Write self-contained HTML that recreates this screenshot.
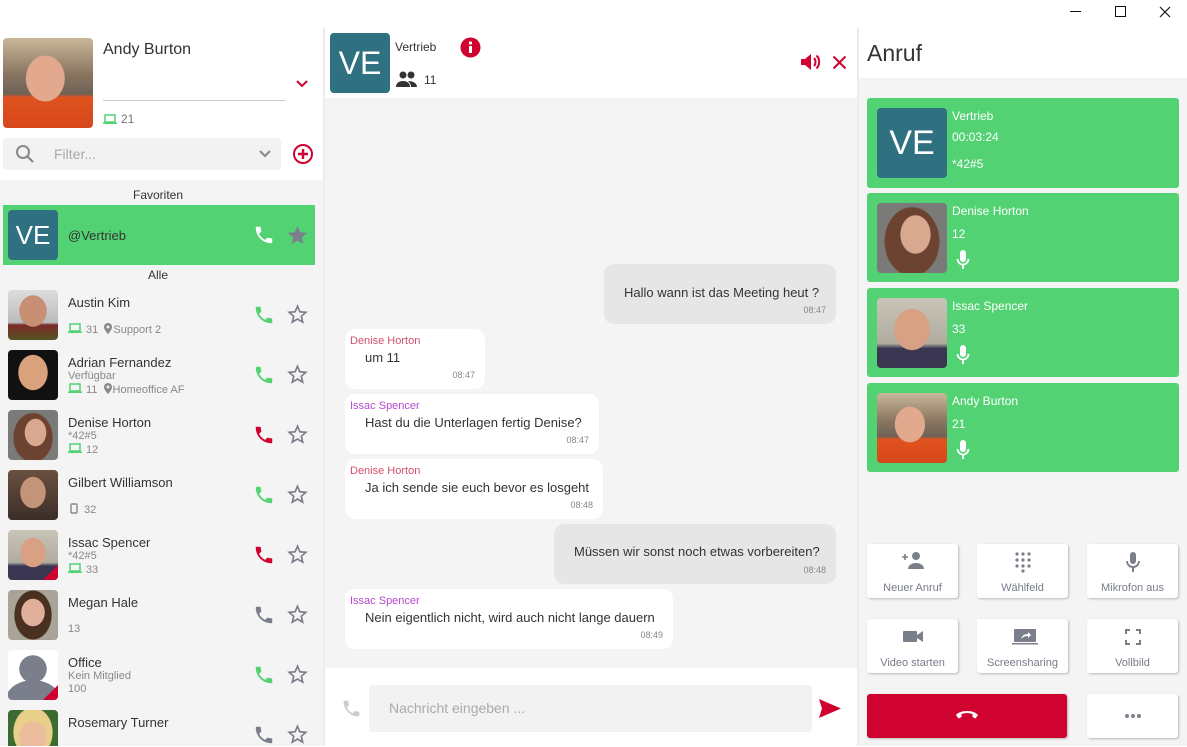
<!DOCTYPE html>
<html><head><meta charset="utf-8">
<style>
*{box-sizing:border-box;margin:0;padding:0}
body{width:1187px;height:746px;position:relative;overflow:hidden;background:#fff;font-family:"Liberation Sans",sans-serif;color:#333}
.a{position:absolute}
.t{position:absolute;white-space:nowrap}
.ph{position:absolute;border-radius:4px;overflow:hidden}
.ve{position:absolute;background:#2f7180;color:#fff;border-radius:4px;display:flex;align-items:center;justify-content:center}
.bub{position:absolute;border-radius:10px;background:#fff}
.me{background:#e6e6e6}
.nm{position:absolute;font-size:11px;left:5px;top:6px}
.msg{position:absolute;font-size:13px;color:#333;white-space:nowrap}
.tm{position:absolute;font-size:9px;color:#888;right:10px;bottom:9px}
.card{position:absolute;left:867px;width:312px;background:#52d273;border-radius:3px;color:#fff}
.btn{position:absolute;width:91px;height:54px;background:#fff;border-radius:3px;box-shadow:1px 1px 2px rgba(0,0,0,.25);font-size:11px;color:#777c88;text-align:center}
.btn span{position:absolute;left:0;right:0;top:38px}
.btn svg{position:absolute;left:35px;top:7px}
.sub{font-size:11px;color:#888}
.lp{display:inline-block;vertical-align:-1px;margin-right:4px}
.pin{display:inline-block;vertical-align:-1px;margin-right:1px}
</style></head><body>
<svg width="0" height="0" style="position:absolute"><defs>
<path id="ph" d="M6.62 10.79c1.44 2.83 3.76 5.14 6.59 6.59l2.2-2.2c.27-.27.67-.36 1.02-.24 1.12.37 2.33.57 3.57.57.55 0 1 .45 1 1V20c0 .55-.45 1-1 1-9.39 0-17-7.61-17-17 0-.55.45-1 1-1h3.5c.55 0 1 .45 1 1 0 1.25.2 2.45.57 3.57.11.35.03.74-.25 1.02l-2.2 2.2z"/>
<path id="st" d="M22 9.24l-7.19-.62L12 2 9.19 8.63 2 9.24l5.46 4.73L5.82 21 12 17.27 18.18 21l-1.63-7.03L22 9.24zM12 15.4l-3.76 2.27 1-4.28-3.32-2.88 4.38-.38L12 6.1l1.71 4.04 4.38.38-3.32 2.88 1 4.28L12 15.4z"/>
<g id="lap"><rect x="2" y="1" width="10" height="7" fill="none" stroke="#52d273" stroke-width="1.5"/><rect x="0" y="8.5" width="14" height="1.5" fill="#52d273"/></g>
<path id="pn" d="M4 0C1.8 0 0 1.8 0 4c0 3 4 7 4 7s4-4 4-7c0-2.2-1.8-4-4-4zm0 5.5A1.5 1.5 0 1 1 4 2.5a1.5 1.5 0 0 1 0 3z"/>
</defs></svg>

<!-- title bar controls -->
<div class="a" style="left:1070px;top:11px;width:11px;height:1px;background:#111"></div>
<div class="a" style="left:1115px;top:6px;width:11px;height:11px;border:1px solid #111"></div>
<svg class="a" style="left:1159px;top:6px" width="12" height="12"><path d="M1 1L11 11M11 1L1 11" stroke="#111" stroke-width="1.2"/></svg>

<!-- LEFT PANEL -->
<div class="a" style="left:0;top:180px;width:323px;height:566px;background:#f4f4f4"></div>
<div class="a" style="left:323px;top:28px;width:2px;height:718px;background:#ececec"></div>

<div class="ph" style="left:3px;top:38px;width:90px;height:90px;background:radial-gradient(ellipse 22% 26% at 47% 45%,#e2a98f 96%,transparent 100%),linear-gradient(#c9b79a 0,#8a7660 40%,#6e6257 62%,#e0531f 66%,#d6471a 100%)"></div>
<div class="t" style="left:103px;top:41px;font-size:16px;color:#333">Andy Burton</div>
<div class="a" style="left:103px;top:100px;width:183px;height:1px;background:#ccc"></div>
<svg class="a" style="left:295px;top:79px" width="14" height="10"><path d="M2 2L7 7L12 2" stroke="#d0022f" stroke-width="2" fill="none"/></svg>
<svg class="a" style="left:103px;top:114px" width="14" height="11"><use href="#lap"/></svg>
<div class="t" style="left:121px;top:112px;font-size:12px;color:#777">21</div>

<div class="a" style="left:3px;top:138px;width:278px;height:32px;background:#f2f2f2;border-radius:4px"></div>
<svg class="a" style="left:15px;top:144px" width="20" height="20"><circle cx="8" cy="8" r="6" fill="none" stroke="#888" stroke-width="2"/><path d="M12.5 12.5L18 18" stroke="#888" stroke-width="2.2"/></svg>
<div class="t" style="left:54px;top:146px;font-size:14px;color:#aaa">Filter...</div>
<svg class="a" style="left:258px;top:149px" width="14" height="10"><path d="M2 2L7 7L12 2" stroke="#888" stroke-width="2" fill="none"/></svg>
<svg class="a" style="left:292px;top:143px" width="22" height="22"><circle cx="11" cy="11" r="9" fill="none" stroke="#d0022f" stroke-width="2"/><path d="M11 6V16M6 11H16" stroke="#d0022f" stroke-width="2.4"/></svg>

<div class="t" style="left:0;width:316px;text-align:center;top:188px;font-size:12px;color:#333">Favoriten</div>
<div class="a" style="left:3px;top:205px;width:312px;height:60px;background:#52d273"></div>
<div class="ve" style="left:8px;top:210px;width:50px;height:50px;font-size:26px">VE</div>
<div class="t" style="left:68px;top:228px;font-size:13px;color:#333">@Vertrieb</div>
<svg class="a" style="left:253px;top:224px" width="22" height="22" viewBox="0 0 24 24"><use href="#ph" fill="#fff"/></svg>
<svg class="a" style="left:286px;top:224px" width="23" height="23" viewBox="0 0 24 24"><path fill="#7b7f8b" d="M12 17.27L18.18 21l-1.64-7.03L22 9.24l-7.19-.61L12 2 9.19 8.63 2 9.24l5.46 4.73L5.82 21z"/></svg>
<div class="t" style="left:0;width:316px;text-align:center;top:268px;font-size:12px;color:#333">Alle</div>

<!-- Austin -->
<div class="ph" style="left:8px;top:290px;width:50px;height:50px;background:radial-gradient(ellipse 28% 32% at 50% 42%,#c98f74 96%,transparent 100%),linear-gradient(#ddd 0,#bbb 65%,#7a2a2a 70%,#552 100%)"></div>
<div class="t" style="left:68px;top:295px;font-size:13px">Austin Kim</div>
<div class="t sub" style="left:68px;top:323px"><svg class="lp" width="14" height="11"><use href="#lap"/></svg>31 &nbsp;<svg class="pin" width="8" height="11"><use href="#pn" fill="#888"/></svg>Support 2</div>
<!-- Adrian -->
<div class="ph" style="left:8px;top:350px;width:50px;height:50px;background:radial-gradient(ellipse 30% 36% at 50% 45%,#d9a27c 96%,transparent 100%),#111"></div>
<div class="t" style="left:68px;top:355px;font-size:13px">Adrian Fernandez</div>
<div class="t sub" style="left:68px;top:370px">Verfügbar</div>
<div class="t sub" style="left:68px;top:383px"><svg class="lp" width="14" height="11"><use href="#lap"/></svg>11 &nbsp;<svg class="pin" width="8" height="11"><use href="#pn" fill="#888"/></svg>Homeoffice AF</div>
<!-- Denise -->
<div class="ph" style="left:8px;top:410px;width:50px;height:50px;background:radial-gradient(ellipse 22% 28% at 55% 45%,#d8a88f 96%,transparent 100%),radial-gradient(ellipse 40% 50% at 50% 55%,#6b4330 96%,transparent 100%),#7a7a78"></div>
<div class="t" style="left:68px;top:415px;font-size:13px">Denise Horton</div>
<div class="t sub" style="left:68px;top:430px">*42#5</div>
<div class="t sub" style="left:68px;top:443px"><svg class="lp" width="14" height="11"><use href="#lap"/></svg>12</div>
<!-- Gilbert -->
<div class="ph" style="left:8px;top:470px;width:50px;height:50px;background:radial-gradient(ellipse 26% 32% at 50% 45%,#c49478 96%,transparent 100%),linear-gradient(#6a5040,#3a2e28)"></div>
<div class="t" style="left:68px;top:475px;font-size:13px">Gilbert Williamson</div>
<div class="t sub" style="left:68px;top:503px"><svg class="lp" width="8" height="11" style="margin-left:2px;margin-right:6px"><rect x="1" y="1" width="6" height="9" rx="1" fill="none" stroke="#888" stroke-width="1.4"/></svg>32</div>
<!-- Issac -->
<div class="ph" style="left:8px;top:530px;width:50px;height:50px;background:radial-gradient(ellipse 26% 30% at 50% 45%,#d9a184 96%,transparent 100%),linear-gradient(#c9c4b8 0,#b0aca0 65%,#3a3550 72%,#3a3550 100%)"><div class="a" style="right:0;bottom:0;width:0;height:0;border-left:15px solid transparent;border-bottom:15px solid #d0022f"></div></div>
<div class="t" style="left:68px;top:535px;font-size:13px">Issac Spencer</div>
<div class="t sub" style="left:68px;top:550px">*42#5</div>
<div class="t sub" style="left:68px;top:563px"><svg class="lp" width="14" height="11"><use href="#lap"/></svg>33</div>
<!-- Megan -->
<div class="ph" style="left:8px;top:590px;width:50px;height:50px;background:radial-gradient(ellipse 24% 28% at 50% 45%,#e0b09a 96%,transparent 100%),radial-gradient(ellipse 38% 50% at 50% 50%,#4a3020 96%,transparent 100%),#a8a598"></div>
<div class="t" style="left:68px;top:595px;font-size:13px">Megan Hale</div>
<div class="t sub" style="left:68px;top:623px">13</div>
<!-- Office -->
<div class="ph" style="left:8px;top:650px;width:50px;height:50px;background:radial-gradient(circle at 50% 38%,#7b7f8b 34%,transparent 35%),radial-gradient(ellipse 55% 40% at 50% 100%,#7b7f8b 98%,transparent 100%),#fff"><div class="a" style="right:0;bottom:0;width:0;height:0;border-left:15px solid transparent;border-bottom:15px solid #d0022f"></div></div>
<div class="t" style="left:68px;top:655px;font-size:13px">Office</div>
<div class="t sub" style="left:68px;top:670px">Kein Mitglied</div>
<div class="t sub" style="left:68px;top:683px">100</div>
<!-- Rosemary -->
<div class="ph" style="left:8px;top:710px;width:50px;height:36px;border-radius:4px 4px 0 0;background:radial-gradient(ellipse 28% 45% at 50% 75%,#ebbc9e 96%,transparent 100%),radial-gradient(ellipse 40% 70% at 50% 62%,#e8cf8a 96%,transparent 100%),#3d6a30"></div>
<div class="t" style="left:68px;top:715px;font-size:13px">Rosemary Turner</div>

<svg class="a" style="left:253px;top:304px" width="22" height="22" viewBox="0 0 24 24"><use href="#ph" fill="#52d273"/></svg>
<svg class="a" style="left:253px;top:364px" width="22" height="22" viewBox="0 0 24 24"><use href="#ph" fill="#52d273"/></svg>
<svg class="a" style="left:253px;top:424px" width="22" height="22" viewBox="0 0 24 24"><use href="#ph" fill="#d0022f"/></svg>
<svg class="a" style="left:253px;top:484px" width="22" height="22" viewBox="0 0 24 24"><use href="#ph" fill="#52d273"/></svg>
<svg class="a" style="left:253px;top:544px" width="22" height="22" viewBox="0 0 24 24"><use href="#ph" fill="#d0022f"/></svg>
<svg class="a" style="left:253px;top:604px" width="22" height="22" viewBox="0 0 24 24"><use href="#ph" fill="#7b7f8b"/></svg>
<svg class="a" style="left:253px;top:664px" width="22" height="22" viewBox="0 0 24 24"><use href="#ph" fill="#52d273"/></svg>
<svg class="a" style="left:253px;top:724px" width="22" height="22" viewBox="0 0 24 24"><use href="#ph" fill="#7b7f8b"/></svg>
<svg class="a" style="left:285px;top:302px" width="25" height="25" viewBox="0 0 24 24"><use href="#st" fill="#7b7f8b"/></svg>
<svg class="a" style="left:285px;top:362px" width="25" height="25" viewBox="0 0 24 24"><use href="#st" fill="#7b7f8b"/></svg>
<svg class="a" style="left:285px;top:422px" width="25" height="25" viewBox="0 0 24 24"><use href="#st" fill="#7b7f8b"/></svg>
<svg class="a" style="left:285px;top:482px" width="25" height="25" viewBox="0 0 24 24"><use href="#st" fill="#7b7f8b"/></svg>
<svg class="a" style="left:285px;top:542px" width="25" height="25" viewBox="0 0 24 24"><use href="#st" fill="#7b7f8b"/></svg>
<svg class="a" style="left:285px;top:602px" width="25" height="25" viewBox="0 0 24 24"><use href="#st" fill="#7b7f8b"/></svg>
<svg class="a" style="left:285px;top:662px" width="25" height="25" viewBox="0 0 24 24"><use href="#st" fill="#7b7f8b"/></svg>
<svg class="a" style="left:285px;top:722px" width="25" height="25" viewBox="0 0 24 24"><use href="#st" fill="#7b7f8b"/></svg>

<!-- MIDDLE -->
<div class="a" style="left:325px;top:98px;width:532px;height:570px;background:#f4f4f4"></div>
<div class="a" style="left:857px;top:28px;width:2px;height:718px;background:#ececec"></div>
<div class="ve" style="left:330px;top:33px;width:60px;height:60px;font-size:32px">VE</div>
<div class="t" style="left:395px;top:40px;font-size:12px;color:#333">Vertrieb</div>
<svg class="a" style="left:460px;top:37px" width="21" height="21"><circle cx="10.5" cy="10.5" r="10" fill="#d0022f"/><circle cx="10.5" cy="6" r="1.6" fill="#fff"/><rect x="9" y="9" width="3" height="7" fill="#fff"/></svg>
<svg class="a" style="left:395px;top:70px" width="24" height="18" viewBox="0 0 24 18"><circle cx="8" cy="5" r="3.5" fill="#333"/><circle cx="16" cy="5" r="3.5" fill="#333"/><path d="M1 17c0-4 3-6 7-6s7 2 7 6z M13 11c4 0 9 1.5 9 6h-6c0-2-1-4-3-6z" fill="#333"/></svg>
<div class="t" style="left:424px;top:73px;font-size:12px;color:#333">11</div>
<svg class="a" style="left:800px;top:53px" width="22" height="18" viewBox="0 0 22 18"><path d="M1 6h4l6-5v16l-6-5H1z" fill="#d0022f"/><path d="M14 5c2 2 2 6 0 8M16.5 2.5c3.5 3.5 3.5 9.5 0 13" stroke="#d0022f" stroke-width="2" fill="none"/></svg>
<svg class="a" style="left:832px;top:55px" width="15" height="15"><path d="M1.5 1.5L13.5 13.5M13.5 1.5L1.5 13.5" stroke="#d0022f" stroke-width="2"/></svg>

<div class="bub me" style="left:604px;top:264px;width:232px;height:60px"><div class="msg" style="left:20px;top:21px">Hallo wann ist das Meeting heut ?</div><div class="tm">08:47</div></div>
<div class="bub" style="left:345px;top:329px;width:140px;height:60px"><div class="nm" style="color:#d0506a">Denise Horton</div><div class="msg" style="left:20px;top:21px">um 11</div><div class="tm">08:47</div></div>
<div class="bub" style="left:345px;top:394px;width:254px;height:60px"><div class="nm" style="color:#b548d0">Issac Spencer</div><div class="msg" style="left:20px;top:21px">Hast du die Unterlagen fertig Denise?</div><div class="tm">08:47</div></div>
<div class="bub" style="left:345px;top:459px;width:258px;height:60px"><div class="nm" style="color:#d0506a">Denise Horton</div><div class="msg" style="left:20px;top:21px">Ja ich sende sie euch bevor es losgeht</div><div class="tm">08:48</div></div>
<div class="bub me" style="left:554px;top:524px;width:282px;height:60px"><div class="msg" style="left:20px;top:20px">Müssen wir sonst noch etwas vorbereiten?</div><div class="tm">08:48</div></div>
<div class="bub" style="left:345px;top:589px;width:328px;height:60px"><div class="nm" style="color:#b548d0">Issac Spencer</div><div class="msg" style="left:20px;top:21px">Nein eigentlich nicht, wird auch nicht lange dauern</div><div class="tm">08:49</div></div>

<svg class="a" style="left:341px;top:698px" width="21" height="21" viewBox="0 0 24 24"><use href="#ph" fill="#ccc"/></svg>
<div class="a" style="left:369px;top:685px;width:443px;height:47px;background:#f2f2f2;border-radius:4px"></div>
<div class="t" style="left:389px;top:700px;font-size:14px;color:#aaa">Nachricht eingeben ...</div>
<svg class="a" style="left:819px;top:699px" width="22" height="19"><path d="M0 0L22 9.5L0 19L3 9.5z" fill="#d0022f"/></svg>

<!-- RIGHT -->
<div class="a" style="left:859px;top:78px;width:328px;height:668px;background:#f4f4f4"></div>
<div class="t" style="left:867px;top:40px;font-size:23px;color:#333">Anruf</div>

<div class="card" style="top:98px;height:90px"></div>
<div class="ve" style="left:877px;top:108px;width:70px;height:70px;font-size:34px">VE</div>
<div class="t" style="left:952px;top:109px;font-size:12px;color:#fff">Vertrieb</div>
<div class="t" style="left:952px;top:130px;font-size:12px;color:#fff">00:03:24</div>
<div class="t" style="left:952px;top:157px;font-size:12px;color:#fff">*42#5</div>

<div class="card" style="top:193px;height:89px"></div>
<div class="ph" style="left:877px;top:203px;width:70px;height:70px;background:radial-gradient(ellipse 22% 28% at 55% 45%,#d8a88f 96%,transparent 100%),radial-gradient(ellipse 40% 50% at 50% 55%,#6b4330 96%,transparent 100%),#7a7a78"></div>
<div class="t" style="left:952px;top:204px;font-size:12px;color:#fff">Denise Horton</div>
<div class="t" style="left:952px;top:227px;font-size:12px;color:#fff">12</div>

<div class="card" style="top:288px;height:89px"></div>
<div class="ph" style="left:877px;top:298px;width:70px;height:70px;background:radial-gradient(ellipse 26% 30% at 50% 45%,#d9a184 96%,transparent 100%),linear-gradient(#c9c4b8 0,#b0aca0 65%,#3a3550 72%,#3a3550 100%)"></div>
<div class="t" style="left:952px;top:299px;font-size:12px;color:#fff">Issac Spencer</div>
<div class="t" style="left:952px;top:322px;font-size:12px;color:#fff">33</div>

<div class="card" style="top:383px;height:89px"></div>
<div class="ph" style="left:877px;top:393px;width:70px;height:70px;background:radial-gradient(ellipse 22% 26% at 47% 45%,#e2a98f 96%,transparent 100%),linear-gradient(#c9b79a 0,#8a7660 40%,#6e6257 62%,#e0531f 66%,#d6471a 100%)"></div>
<div class="t" style="left:952px;top:394px;font-size:12px;color:#fff">Andy Burton</div>
<div class="t" style="left:952px;top:417px;font-size:12px;color:#fff">21</div>

<svg class="a" style="left:956px;top:250px" width="14" height="21"><rect x="4" y="0" width="6" height="12" rx="3" fill="#fff"/><path d="M1.5 9c0 3 2.5 5.5 5.5 5.5s5.5-2.5 5.5-5.5" stroke="#fff" stroke-width="1.8" fill="none"/><rect x="6" y="14" width="2" height="5" fill="#fff"/></svg>
<svg class="a" style="left:956px;top:345px" width="14" height="21"><rect x="4" y="0" width="6" height="12" rx="3" fill="#fff"/><path d="M1.5 9c0 3 2.5 5.5 5.5 5.5s5.5-2.5 5.5-5.5" stroke="#fff" stroke-width="1.8" fill="none"/><rect x="6" y="14" width="2" height="5" fill="#fff"/></svg>
<svg class="a" style="left:956px;top:440px" width="14" height="21"><rect x="4" y="0" width="6" height="12" rx="3" fill="#fff"/><path d="M1.5 9c0 3 2.5 5.5 5.5 5.5s5.5-2.5 5.5-5.5" stroke="#fff" stroke-width="1.8" fill="none"/><rect x="6" y="14" width="2" height="5" fill="#fff"/></svg>

<div class="btn" style="left:867px;top:544px"><svg width="22" height="20" viewBox="0 0 22 20"><path d="M0 6h6M3 3v6" stroke="#7b7f8b" stroke-width="1.6"/><circle cx="14" cy="5" r="4" fill="#7b7f8b"/><path d="M6 18c0-4 4-6 8-6s8 2 8 6z" fill="#7b7f8b"/></svg><span>Neuer Anruf</span></div>
<div class="btn" style="left:977px;top:544px"><svg width="22" height="22" viewBox="0 0 22 22"><g fill="#7b7f8b"><circle cx="5" cy="3" r="1.6"/><circle cx="11" cy="3" r="1.6"/><circle cx="17" cy="3" r="1.6"/><circle cx="5" cy="9" r="1.6"/><circle cx="11" cy="9" r="1.6"/><circle cx="17" cy="9" r="1.6"/><circle cx="5" cy="15" r="1.6"/><circle cx="11" cy="15" r="1.6"/><circle cx="17" cy="15" r="1.6"/><circle cx="11" cy="20" r="1.6"/></g></svg><span>Wählfeld</span></div>
<div class="btn" style="left:1087px;top:544px"><svg width="22" height="22" viewBox="0 0 22 22"><rect x="8" y="1" width="6" height="12" rx="3" fill="#7b7f8b"/><path d="M5 10c0 3.5 2.7 6 6 6s6-2.5 6-6" stroke="#7b7f8b" stroke-width="1.8" fill="none"/><rect x="10" y="16" width="2" height="5" fill="#7b7f8b"/></svg><span>Mikrofon aus</span></div>
<div class="btn" style="left:867px;top:619px"><svg width="22" height="20" viewBox="0 0 22 20"><rect x="1" y="5" width="14" height="11" rx="1" fill="#7b7f8b"/><path d="M15 9l6-4v11l-6-4z" fill="#7b7f8b"/></svg><span>Video starten</span></div>
<div class="btn" style="left:977px;top:619px"><svg width="26" height="20" viewBox="0 0 26 20"><rect x="2" y="3" width="22" height="13" rx="1" fill="#7b7f8b"/><rect x="0" y="17" width="26" height="1.5" fill="#7b7f8b"/><path d="M9 13c1-3 3-5 7-5V6l3 3-3 3v-2c-3 0-5 1-7 3z" fill="#fff"/></svg><span>Screensharing</span></div>
<div class="btn" style="left:1087px;top:619px"><svg width="22" height="22" viewBox="0 0 22 22"><path d="M4 8V4h4M14 4h4v4M18 14v4h-4M8 18H4v-4" stroke="#7b7f8b" stroke-width="2" fill="none"/></svg><span>Vollbild</span></div>
<div class="a" style="left:867px;top:694px;width:200px;height:44px;background:#d0022f;border-radius:3px;box-shadow:1px 1px 2px rgba(0,0,0,.25)"></div>
<svg class="a" style="left:955px;top:709px" width="24" height="12" viewBox="0 0 24 12"><path d="M12 2C7 2 3 3.5 1 6l2.5 3.5 3-1.5V5c1.7-.6 3.6-.9 5.5-.9s3.8.3 5.5.9v3l3 1.5L23 6c-2-2.5-6-4-11-4z" fill="#fff"/></svg>
<div class="a" style="left:1087px;top:694px;width:91px;height:44px;background:#fff;border-radius:3px;box-shadow:1px 1px 2px rgba(0,0,0,.25)"></div>
<svg class="a" style="left:1124px;top:713px" width="18" height="6"><circle cx="3" cy="3" r="2" fill="#7b7f8b"/><circle cx="9" cy="3" r="2" fill="#7b7f8b"/><circle cx="15" cy="3" r="2" fill="#7b7f8b"/></svg>

</body></html>
